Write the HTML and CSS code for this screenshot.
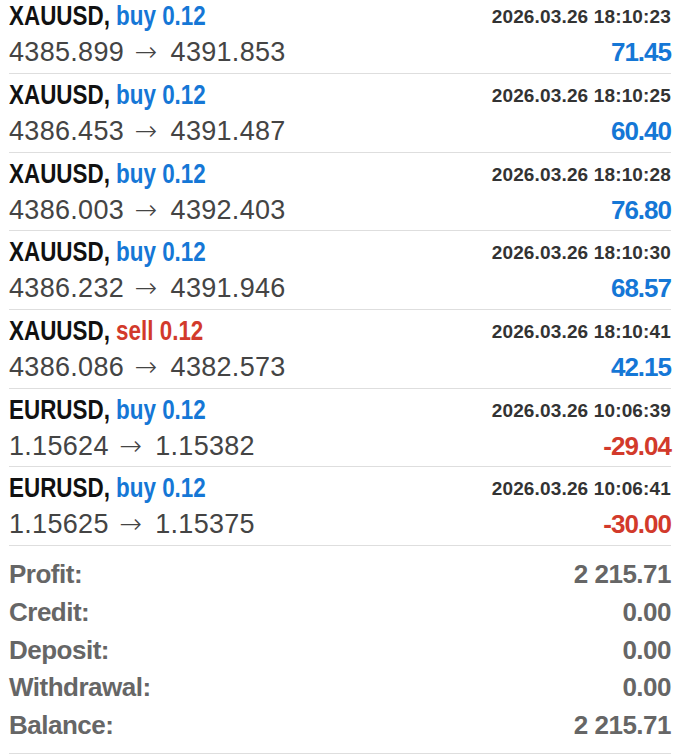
FILE: index.html
```html
<!DOCTYPE html>
<html lang="en">
<head>
    <meta charset="UTF-8">
    <meta name="viewport" content="width=device-width, initial-scale=1.0">
    <title>History</title>
    <link rel="stylesheet" href="styles.css">
</head>
<body>
    <div class="deals">
        <div class="deal">
            <div class="deal-top">
                <span class="symbol">XAUUSD, <span class="buy">buy 0.12</span></span>
                <span class="time">2026.03.26 18:10:23</span>
            </div>
            <div class="deal-bottom">
                <span class="prices">4385.899 <span class="arrow">→</span> 4391.853</span>
                <span class="profit plus">71.45</span>
            </div>
        </div>
        <div class="deal">
            <div class="deal-top">
                <span class="symbol">XAUUSD, <span class="buy">buy 0.12</span></span>
                <span class="time">2026.03.26 18:10:25</span>
            </div>
            <div class="deal-bottom">
                <span class="prices">4386.453 <span class="arrow">→</span> 4391.487</span>
                <span class="profit plus">60.40</span>
            </div>
        </div>
        <div class="deal">
            <div class="deal-top">
                <span class="symbol">XAUUSD, <span class="buy">buy 0.12</span></span>
                <span class="time">2026.03.26 18:10:28</span>
            </div>
            <div class="deal-bottom">
                <span class="prices">4386.003 <span class="arrow">→</span> 4392.403</span>
                <span class="profit plus">76.80</span>
            </div>
        </div>
        <div class="deal">
            <div class="deal-top">
                <span class="symbol">XAUUSD, <span class="buy">buy 0.12</span></span>
                <span class="time">2026.03.26 18:10:30</span>
            </div>
            <div class="deal-bottom">
                <span class="prices">4386.232 <span class="arrow">→</span> 4391.946</span>
                <span class="profit plus">68.57</span>
            </div>
        </div>
        <div class="deal">
            <div class="deal-top">
                <span class="symbol">XAUUSD, <span class="sell">sell 0.12</span></span>
                <span class="time">2026.03.26 18:10:41</span>
            </div>
            <div class="deal-bottom">
                <span class="prices">4386.086 <span class="arrow">→</span> 4382.573</span>
                <span class="profit plus">42.15</span>
            </div>
        </div>
        <div class="deal">
            <div class="deal-top">
                <span class="symbol">EURUSD, <span class="buy">buy 0.12</span></span>
                <span class="time">2026.03.26 10:06:39</span>
            </div>
            <div class="deal-bottom">
                <span class="prices">1.15624 <span class="arrow">→</span> 1.15382</span>
                <span class="profit minus">-29.04</span>
            </div>
        </div>
        <div class="deal">
            <div class="deal-top">
                <span class="symbol">EURUSD, <span class="buy">buy 0.12</span></span>
                <span class="time">2026.03.26 10:06:41</span>
            </div>
            <div class="deal-bottom">
                <span class="prices">1.15625 <span class="arrow">→</span> 1.15375</span>
                <span class="profit minus">-30.00</span>
            </div>
        </div>
    </div>

    <div class="summary">
        <div class="summary-row"><span>Profit:</span><span>2 215.71</span></div>
        <div class="summary-row"><span>Credit:</span><span>0.00</span></div>
        <div class="summary-row"><span>Deposit:</span><span>0.00</span></div>
        <div class="summary-row"><span>Withdrawal:</span><span>0.00</span></div>
        <div class="summary-row"><span>Balance:</span><span>2 215.71</span></div>
    </div>
</body>
</html>
```

FILE: styles.css
```css
body {
    margin: 0;
    padding: 0 9px;
    background-color: #fff;
    font-family: "Liberation Sans", Arial, sans-serif;
    overflow: hidden;
}

.deals {
    margin-top: -4.67px;
}

.deal {
    height: 77.67px;
    border-bottom: 1px solid #dedede;
}

.deal-top,
.deal-bottom {
    display: flex;
    justify-content: space-between;
}

.deal-top {
    height: 39px;
    align-items: flex-start;
}

.deal-bottom {
    height: 38.67px;
    align-items: baseline;
    line-height: 36px;
}

/* no condensed bold installed, so squeeze the symbol line */
.symbol {
    display: inline-block;
    padding-top: 2px;
    line-height: 38px;
    font-weight: bold;
    font-size: 27px;
    color: #111;
    white-space: nowrap;
    transform: scaleX(0.83);
    transform-origin: left center;
}

.buy {
    color: #1577d6;
}

.sell {
    color: #d23a2b;
}

.time {
    padding-top: 2px;
    line-height: 39px;
    font-weight: bold;
    font-size: 19px;
    letter-spacing: 0.15px;
    color: #333;
}

.prices {
    font-size: 27px;
    letter-spacing: 0.3px;
    word-spacing: 3px;
    color: #444;
}

.arrow {
    margin-right: 2px;
    font-family: "DejaVu Sans", sans-serif;
    font-weight: 200;
}

.profit {
    font-weight: bold;
    font-size: 26px;
    letter-spacing: -1px;
}

.profit.plus {
    color: #1577d6;
}

.profit.minus {
    color: #d23a2b;
}

.summary {
    padding: 10.5px 0 8.5px;
    border-bottom: 1px solid #dedede;
}

.summary-row {
    display: flex;
    justify-content: space-between;
    height: 37.6px;
    line-height: 37.6px;
    font-weight: bold;
    font-size: 26px;
    letter-spacing: -0.5px;
    color: #666;
}
```
